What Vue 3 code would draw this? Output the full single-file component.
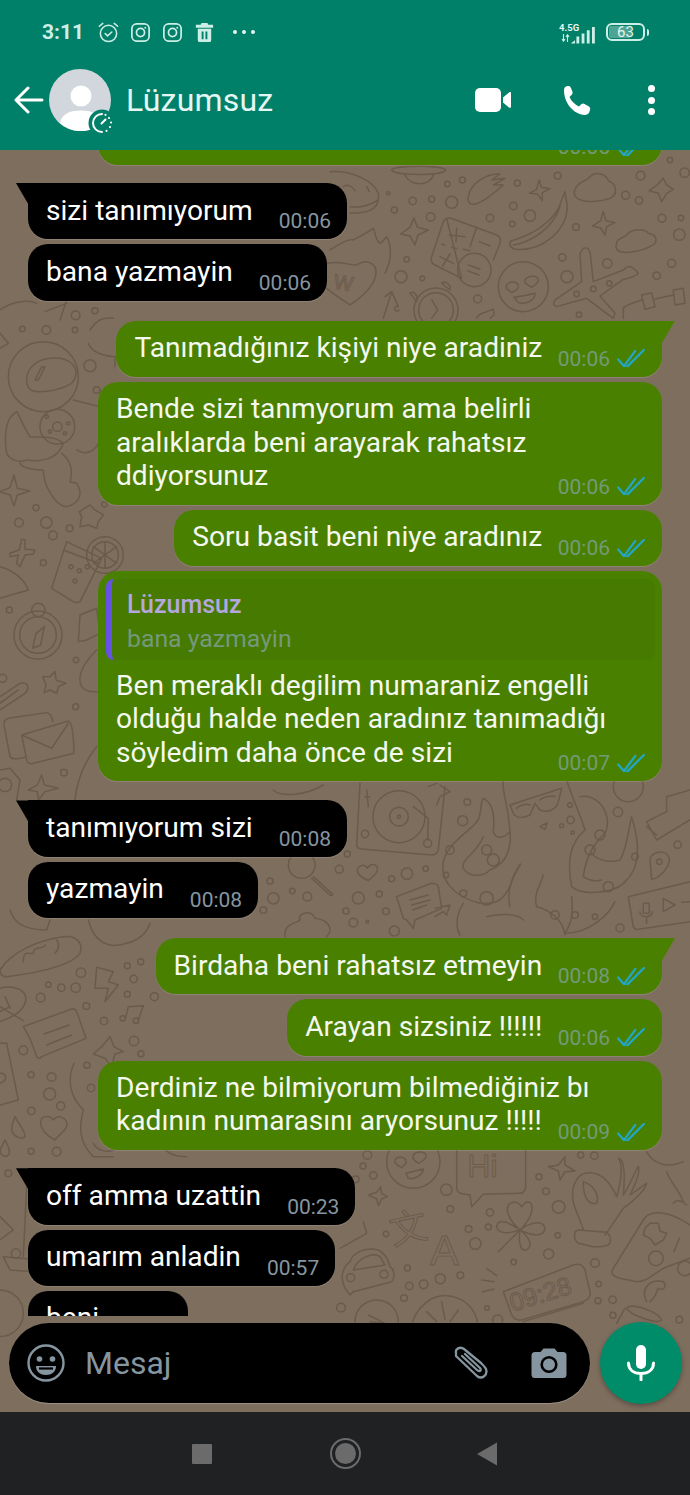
<script setup>
// chat content
const messages = [
  { side: 'out', text: '\u00a0', time: '00:05', wide: true, first: true },
  { side: 'in', text: 'sizi tanımıyorum', time: '00:06', tail: true, group: 'g18' },
  { side: 'in', text: 'bana yazmayin', time: '00:06' },
  { side: 'out', text: 'Tanımadığınız kişiyi niye aradiniz', time: '00:06', tail: true, group: 'g20' },
  { side: 'out', text: 'Bende sizi tanmyorum ama belirli\naralıklarda beni arayarak rahatsız\nddiyorsunuz', time: '00:06', wide: true },
  { side: 'out', text: 'Soru basit beni niye aradınız', time: '00:06' },
  {
    side: 'out',
    text: 'Ben meraklı degilim numaraniz engelli\nolduğu halde neden aradınız tanımadığı\nsöyledim daha önce de sizi',
    time: '00:07',
    wide: true,
    quote: { name: 'Lüzumsuz', text: 'bana yazmayin' }
  },
  { side: 'in', text: 'tanımıyorum sizi', time: '00:08', tail: true, group: 'g19' },
  { side: 'in', text: 'yazmayin', time: '00:08' },
  { side: 'out', text: 'Birdaha beni rahatsız etmeyin', time: '00:08', tail: true, group: 'g20' },
  { side: 'out', text: 'Arayan sizsiniz !!!!!!', time: '00:06' },
  { side: 'out', text: 'Derdiniz ne bilmiyorum bilmediğiniz bı\nkadının numarasını aryorsunuz !!!!!', time: '00:09', wide: true },
  { side: 'in', text: 'off amma uzattin', time: '00:23', tail: true, group: 'g18' },
  { side: 'in', text: 'umarım anladin', time: '00:57' },
  { side: 'in', text: 'beni', time: '00:58', short: true }
]

// wallpaper doodles, each zone drawn in 3x coordinates from its origin
const zones = [
  {
    x: 330, y: 150,
    circles: [[175,130,5],[248,153,11],[305,148,9],[365,157,18],[193,180,9],[302,201,13],[352,102,8],[397,90,9],[562,99,9],[683,77,10],[550,168,11],[480,204,11],[547,222,8],[600,197,17],[738,231,10],[887,136,12],[927,151,11],[932,77,13],[1064,68,14],[1020,30,8],[996,205,12],[1053,204,8],[1048,254,17],[230,328,8],[213,380,18],[277,385,7],[697,322,11],[832,340,14],[1025,340,12],[980,377,11],[711,380,18],[443,447,12],[747,494,8],[433,360,50],[580,410,75],[318,480,66],[318,480,52],[790,417,8],[838,400,8],[740,432,8]],
    paths: [
      'M0 65 C60 60 130 90 145 130 C150 170 130 190 60 190 M40 110 C50 100 70 110 75 122 M110 110 L118 125 M60 170 C90 175 120 165 145 150',
      'M185 60 C190 45 340 45 347 60 C340 78 195 78 185 60 M225 75 C240 110 300 110 310 75',
      'M415 140 C420 100 470 70 510 72 L485 90 L525 85 L490 105 L520 105 C490 130 440 175 420 160 Q412 152 415 140Z',
      'M628 90 L634 112 L660 116 L637 128 L637 152 L622 132 L598 130 L620 118Z',
      'M705 125 L695 150 C680 210 610 255 545 272 C535 280 540 295 555 298 C640 305 710 240 712 170 L705 125 M690 170 C670 230 610 275 550 285',
      'M735 120 C740 95 770 95 780 80 C800 60 830 75 835 92 C860 100 865 135 840 145 C800 160 730 160 733 125Z',
      'M1000 85 L1010 105 L1030 118 L1010 130 L995 155 L985 130 L958 122 L982 105Z',
      'M820 185 L828 212 L855 218 L830 230 L825 255 L812 234 L788 228 L812 212Z',
      'M860 280 C860 262 885 265 895 250 C915 232 950 240 955 250 C985 255 985 280 960 290 C930 305 860 320 858 290Z',
      'M252 203 L262 232 L295 240 L264 255 L255 285 L240 258 L212 252 L240 232Z',
      'M350 205 Q360 203 370 207 L500 255 Q515 262 510 280 L490 330 M395 385 L315 345 Q300 338 305 320 L340 215 Q345 207 350 205Z M380 235 L378 275 M358 255 L405 260 M448 275 L480 288 M330 320 L370 340 M360 312 L338 348 M440 232 L420 290 M335 282 L345 285 M365 292 L380 296 M400 298 L420 302 M415 345 L450 358 M412 362 L447 375',
      'M-10 340 C40 330 70 350 80 345 C110 325 140 340 138 370 C135 410 90 445 60 465 C30 445 -10 420 -25 400',
      'M0 300 C30 280 60 265 70 270 C85 260 110 250 130 235 C140 260 135 270 150 280 C160 275 165 265 170 260 C185 290 185 330 165 370',
      'M530 405 C540 390 565 395 565 410 C565 420 550 425 545 428 C535 420 525 415 530 405Z M585 390 C595 375 625 375 625 390 C625 400 615 405 605 412 C595 405 580 400 585 390Z M552 442 C570 440 595 435 615 430 C615 450 590 465 565 458Z',
      'M760 295 C775 290 780 300 782 320 L790 395 L880 360 C895 345 905 345 925 370 C915 380 900 385 880 388 L810 438 L855 490 L850 505 L770 445 L680 470 C665 465 670 450 690 440 L755 395 L750 310Z',
      'M880 505 L880 475 C885 465 920 455 935 450 M975 447 L1030 435 M935 435 L965 428 L975 470 L945 478Z M1030 420 L1060 415 L1065 460 L1035 465Z',
      'M305 450 L323 480 L305 505 M335 400 C345 390 365 405 360 420Z M240 430 C250 420 265 435 260 455Z',
      'M160 505 L185 425 L205 470 M185 425 L165 440 M205 470 a7 7 0 1 0 2 10',
      'M440 505 C445 490 460 490 470 485 L490 478 L492 495 L480 505'
    ],
    texts: [
      { value: 'W', x: 8, y: 415, size: 62, rotate: 10 }
    ]
  },
  {
    x: 0, y: 300,
    circles: [[227,46,13],[285,32,9],[67,87,8],[139,90,13],[225,90,8],[270,197,18],[290,270,10],[108,623,9],[313,613,8],[57,668,13],[139,668,17],[209,685,10],[159,706,13],[130,788,9],[28,930,9],[228,1080,8],[8,1135,12],[227,1220,9],[192,1418,10],[130,230,105],[172,380,52],[172,380,14],[140,350,5],[205,370,5],[150,395,5],[195,400,5],[213,800,6],[238,812,6],[262,800,6],[225,843,6],[315,765,55],[315,765,40],[114,1005,72],[114,1005,55],[115,930,20],[15,1455,20]],
    paths: [
      'M80 240 C80 190 130 170 180 175 C230 185 240 220 215 250 C190 265 150 275 115 275 C90 275 80 260 80 240Z M105 240 L125 200 L135 200 L115 240Z',
      'M50 335 C20 350 10 400 20 460 C30 480 60 490 80 480 C150 490 180 460 190 430 C170 410 130 410 90 410 C70 380 60 350 50 335',
      'M60 490 C70 510 130 510 130 510 C130 560 170 620 200 620 C240 610 250 580 230 550 L210 545 C220 510 210 480 185 460 M220 300 L300 320 M230 450 C260 470 290 450 300 420',
      'M42 525 L52 565 L90 573 L52 585 L42 618 L30 585 L0 575 L30 563Z',
      'M270 615 L285 630 L310 645 L295 665 L290 685 L265 675 L240 680 L245 650 L238 635Z',
      'M65 718 L75 720 L75 748 L105 750 L100 762 L75 765 L60 800 L50 790 L55 765 L30 770 L30 760 L58 750Z',
      'M0 800 C40 810 75 840 85 870 L0 895',
      'M200 725 L305 775 L240 905 Q230 910 220 905 L155 865Z M190 750 L295 790 M315 725 L315 805 M280 740 L350 790 M280 790 L350 740',
      'M133 980 L122 1035 L98 1045 L108 1000Z',
      'M0 1190 L60 1150 C85 1145 90 1165 75 1180 L0 1230 M0 1210 L55 1170',
      'M25 1255 L140 1238 Q155 1240 158 1265 M25 1255 Q10 1260 12 1275 L30 1370 Q35 1380 60 1375 L75 1372',
      'M65 1305 L205 1263 Q220 1265 222 1360 L100 1390 Q85 1395 80 1380Z M65 1305 L155 1345 L205 1270',
      'M125 1425 L133 1455 L175 1465 L135 1475 L115 1500 L112 1475 L85 1470 L112 1455Z',
      'M0 1410 L30 1405 L60 1440 L50 1500',
      'M165 1115 L168 1140 L198 1150 L175 1160 L170 1180 L150 1170 L132 1178 L138 1155 L128 1130 L150 1130Z',
      'M240 945 L290 925 L300 1000 L260 1020 L235 1025Z M290 1050 C250 1090 230 1130 245 1160 C260 1180 280 1175 300 1175',
      'M270 90 C290 60 310 50 340 55 M265 130 C275 160 320 170 345 170 L345 200',
      'M0 30 C40 0 90 0 110 10 M135 35 L200 10 M180 60 L200 0 M0 100 L25 130 L0 145',
      'M290 1340 C250 1390 230 1450 225 1500'
    ]
  },
  {
    x: 250, y: 780,
    circles: [[652,66,10],[638,122,15],[268,268,12],[292,222,9],[471,281,17],[425,296,9],[527,266,8],[60,303,9],[70,355,17],[127,333,8],[172,350,13],[325,354,18],[388,342,9],[288,393,9],[408,394,10],[310,428,13],[352,425,4],[40,390,10],[433,453,15],[1104,96,14],[1283,194,11],[1110,444,12],[960,75,7],[935,137,6],[962,120,11],[968,158,5],[447,110,78],[447,110,28],[447,110,5],[533,190,12],[345,162,11],[600,210,13],[588,285,8],[710,210,15],[730,240,18],[1050,165,15],[1020,210,15],[1155,230,10],[710,355,20],[640,340,10],[1075,320,15],[975,405,10],[1035,410,8],[915,405,13],[155,255,40],[1228,245,8],[1135,20,45]],
    paths: [
      'M330 10 L320 195 Q320 205 335 207 L545 225 Q560 225 565 210 L585 20 M490 80 L535 115 L533 180 M350 30 L355 80 M345 50 L360 50 M535 20 L560 10 M570 15 L600 35 L570 50 L560 75',
      'M690 100 C690 145 600 170 580 245 C570 300 610 350 690 370 C740 375 770 360 790 290 C800 270 805 260 812 252',
      'M700 55 C730 70 735 110 730 155 C740 180 760 175 780 155 C785 210 770 250 720 270 C700 290 660 295 640 265 C630 240 680 220 700 170 M700 55 C690 70 695 85 690 100',
      'M760 0 C755 40 775 70 780 155',
      'M990 50 C1050 40 1090 110 1065 160 C1020 200 1005 250 1000 290 C1030 310 1050 300 1055 300',
      'M950 0 C965 50 990 100 1005 150 C960 190 950 240 965 320 C1000 350 1100 340 1130 300 C1170 260 1170 190 1145 110 C1135 150 1130 210 1110 240 C1080 250 1040 240 1025 220',
      'M810 255 C780 300 770 340 780 380 M880 285 C870 320 850 340 860 380 C900 390 940 420 945 465 M640 370 C620 400 615 440 630 465 M965 350 C970 400 965 430 945 460 C1020 460 1080 400 1095 365 M710 410 C750 400 800 400 820 420',
      'M780 75 L935 25 L925 65 C920 90 890 100 870 90 L855 70 L840 105 C820 115 800 115 790 100Z M800 85 C810 75 830 70 840 75 M870 60 C880 50 910 45 915 50 M870 140 L892 128 L885 148Z',
      'M322 270 C325 255 345 250 352 265 C365 245 385 255 382 270 C380 285 360 295 355 302 C340 295 320 285 322 270Z',
      'M190 290 L245 340 Q252 350 240 345 L185 295',
      'M440 350 L545 310 Q560 310 565 320 L575 385 L495 420 L490 445 L470 420 L460 415Z M480 360 L535 345 M485 375 L540 360 M488 390 L530 375 M555 385 L600 375 L590 405 L580 395 L555 410',
      'M1200 240 C1200 215 1250 205 1258 235 C1260 265 1225 295 1205 298Z',
      'M1135 350 L1320 305 M1135 350 L1150 440 Q1155 450 1165 448 L1320 425 M1180 370 L1198 370 L1198 400 L1180 400Z M1170 395 C1170 415 1205 415 1208 395 M1190 415 L1190 430 M1240 355 L1275 375 L1240 395Z M1295 367 L1320 365',
      'M1190 125 L1250 95 L1250 50 L1320 30 M1190 125 L1220 180 L1320 120 M1190 140 L1220 165',
      'M105 470 C100 430 140 430 150 420 C140 395 190 390 195 415 C240 420 250 450 230 470 M70 30 C90 50 160 50 220 15'
    ]
  },
  {
    x: 330, y: 1145,
    circles: [[112,30,13],[99,63,9],[130,91,11],[77,103,10],[349,134,17],[361,192,10],[480,202,11],[475,246,9],[416,252,10],[436,296,17],[168,267,8],[232,369,9],[331,401,15],[391,391,10],[281,418,13],[238,423,11],[222,459,10],[33,488,13],[471,489,7],[551,351,8],[656,327,15],[683,271,8],[686,186,19],[648,139,10],[627,95,9],[752,30,9],[793,32,11],[795,354,13],[806,417,8],[804,467,9],[848,464,11],[849,511,9],[1048,524,10],[503,525,15],[250,50,80],[62,398,12],[162,388,12],[978,340,22],[1065,370,22],[140,530,65]],
    paths: [
      'M195 45 C205 30 230 35 228 55 L215 68 C205 62 190 55 195 45Z M250 30 C262 15 290 20 288 35 C285 45 275 50 265 55 C255 48 245 42 250 30Z M228 85 L280 72 C280 90 250 105 235 100Z',
      'M380 0 L380 130 Q382 145 400 147 L420 150 L425 185 L460 148 L570 145 Q585 145 587 125 L587 0',
      'M570 255 C540 230 520 190 540 175 C565 165 570 180 575 185 C590 165 610 165 605 200 C600 225 580 245 570 255 C600 230 640 225 645 250 C640 280 600 270 570 255 C600 280 610 300 590 315 C570 320 565 290 570 255 C540 265 505 270 500 245 C505 215 540 235 570 255 M570 255 L505 320',
      'M730 170 C720 120 745 90 765 85 C810 75 840 110 860 155 C880 90 875 50 865 40 C885 40 885 100 880 150 C905 110 920 70 925 65 C930 75 925 100 900 150 L950 115 C945 140 900 175 880 190 C860 220 840 250 825 270 M730 170 C735 200 755 230 760 255 M760 110 C790 120 810 150 800 175 C770 180 760 150 760 110 M745 255 L830 262 Q845 270 840 295 Q830 308 790 305 L745 295 Q730 285 735 260Z',
      'M850 370 L940 225 C960 190 1020 200 1080 240 M850 370 C840 385 850 395 870 400 L920 410 C950 410 960 395 1000 370 L1080 340 M960 235 L985 235 L990 258 L1010 265 L1000 285 L975 300 L960 280 L940 270 L945 250Z M1048 280 L1032 320 M950 470 C930 430 960 400 1000 410 C1010 420 1005 440 985 430 C975 440 985 450 960 470',
      'M950 20 C970 60 1020 70 1060 50 M1010 80 C1020 110 1050 140 1060 170 M1030 175 C1040 160 1060 170 1070 180',
      'M705 35 L705 60 L735 78 L705 80 L690 105 L685 78 L655 65 L685 60Z',
      'M152 125 L155 145 L172 155 L155 162 L145 182 L140 162 L115 150 L140 142Z',
      'M60 350 C70 320 110 305 145 315 C165 325 175 345 180 365 C195 375 195 400 185 410 L70 440 L60 450 L45 430 C30 400 35 370 60 350 M70 375 L165 360 M70 375 C80 340 130 320 150 335 L165 360',
      'M520 440 L730 360 Q755 352 765 375 L780 440 Q785 460 760 470 L575 525 Q555 528 545 510Z M580 530 L760 475 M470 370 L500 392 M455 405 L492 410 M457 440 L492 432',
      'M245 540 C260 480 310 450 350 452 C400 455 440 490 443 540 M290 500 L320 530 M335 470 L345 525 M385 495 L360 530',
      'M115 510 L165 535 L120 530',
      'M890 490 C900 470 985 500 995 525 C985 540 900 510 890 490 M885 490 L860 535',
      'M100 230 L110 265 L30 310'
    ],
    texts: [
      { value: 'Hi', x: 412, y: 95, size: 96 },
      { value: '文', x: 188, y: 300, size: 112, rotate: -12 },
      { value: 'A', x: 300, y: 360, size: 130 },
      { value: '09:28', x: 548, y: 500, size: 76, rotate: -17 }
    ]
  },
  {
    x: 0, y: 910,
    circles: [[243,188,14],[382,167,9],[422,155,9],[401,207,11],[382,253,9],[463,260,12],[145,224,8],[184,233,11],[227,233,14],[122,263,13],[259,288,10],[312,333,11],[402,393,14],[423,431,9],[70,421,13],[261,466,9],[273,534,11],[93,494,9],[155,501,13],[149,552,18],[182,588,12],[94,603,11],[93,724,9],[170,725,13],[368,325,8],[408,332,8],[25,790,10],[48,1030,14],[0,1210,70]],
    paths: [
      'M0 180 C30 130 110 90 190 80 C230 75 250 100 240 130 C210 170 100 190 20 200 C5 200 0 190 0 180 M70 155 C70 115 90 135 100 130 C100 105 130 120 135 105 M170 90 C180 105 175 120 165 130',
      'M290 172 L340 185 L325 215 L355 225 L315 275 L325 235 L285 235Z',
      'M0 235 C30 225 75 235 78 265 C75 305 30 325 0 335 M0 290 L70 332 M15 260 L30 295 M0 305 L30 290',
      'M375 330 L385 290 L430 287 L415 330',
      'M70 350 L215 297 Q225 295 230 305 L258 385 L125 440 Q115 450 110 440 L90 385Z M132 372 L208 345 M140 405 L215 375',
      'M330 380 L342 410 L370 425 L345 432 L335 470 L315 445 L280 432 L305 410Z',
      'M0 400 L20 400 L55 570 L0 585 M0 490 C20 490 25 510 0 520',
      'M45 620 C55 640 80 670 75 680 C65 690 40 680 35 660 C35 640 40 630 45 620Z M15 690 C22 705 35 725 25 735 C15 745 0 735 0 720Z',
      'M122 635 C125 615 150 615 160 630 C175 610 205 625 200 650 C190 670 170 680 165 690 C145 680 120 660 122 635Z',
      'M222 460 C200 510 210 560 250 600 C240 640 230 690 280 740 L340 740',
      'M80 830 L70 1040 M10 1040 L120 1050 L100 1085 L30 1080Z M0 920 L40 960 L0 990',
      'M30 0 C40 30 60 60 140 60 L150 30 M265 30 C280 90 320 120 380 100 C420 90 440 70 450 40',
      'M480 700 C500 730 520 740 560 740 M280 700 C290 720 320 730 340 720'
    ]
  }
]
</script>

<template>
  <div class="phone">
    <header class="appbar">
      <div class="status">
        <span class="clock">3:11</span>
        <svg class="st-icon" viewBox="0 0 24 24" fill="none" stroke="currentColor" stroke-width="1.6" stroke-linecap="round" stroke-linejoin="round">
          <circle cx="12" cy="13" r="8.5" />
          <path d="M8.5 13l2.5 2.5 4.5-4M2.5 5.5L6 2.5M21.5 5.5L18 2.5" />
        </svg>
        <svg class="st-icon" viewBox="0 0 24 24" fill="none" stroke="currentColor" stroke-width="1.8">
          <rect x="3" y="3" width="18" height="18" rx="5" />
          <circle cx="12" cy="12" r="4.2" />
          <circle cx="17" cy="7" r="1" fill="currentColor" stroke="none" />
        </svg>
        <svg class="st-icon" viewBox="0 0 24 24" fill="none" stroke="currentColor" stroke-width="1.8">
          <rect x="3" y="3" width="18" height="18" rx="5" />
          <circle cx="12" cy="12" r="4.2" />
          <circle cx="17" cy="7" r="1" fill="currentColor" stroke="none" />
        </svg>
        <svg class="st-icon" viewBox="0 0 24 24" fill="currentColor">
          <path d="M9 2h6l1 2h5v3H3V4h5zM5 8h14v12a2 2 0 0 1-2 2H7a2 2 0 0 1-2-2zm4 3v8h2v-8zm4 0v8h2v-8z" fill-rule="evenodd" />
        </svg>
        <span class="more-dots"><i></i><i></i><i></i></span>
        <span class="status-right">
          <span class="net">
            <span class="net-label">4.5G</span>
            <svg class="net-arrows" viewBox="0 0 9 8" fill="none" stroke="currentColor" stroke-width="1.1">
              <path d="M2.5 0v7M1 5.2l1.5 2 1.5-2M6.5 8V1M5 2.8l1.5-2 1.5 2" />
            </svg>
          </span>
          <svg class="signal" viewBox="0 0 26 18" fill="currentColor">
            <path d="M0 17l4-3v3.5H0zM5.500 10h3v7.500h-3zM11 7h3v10.500h-3zM16.500 3.500h3v14h-3zM22 0h3v17.500h-3z" />
          </svg>
          <span class="battery"><span class="battery-fill"></span><span class="battery-num">63</span></span>
          <span class="battery-cap"></span>
        </span>
      </div>

      <div class="title-row">
        <svg class="back" viewBox="0 0 30 28" fill="none" stroke="#fff" stroke-width="3" stroke-linecap="round" stroke-linejoin="round">
          <path d="M2 14h26M14 2L2 14l12 12" />
        </svg>
        <div class="avatar">
          <svg viewBox="0 0 62 62" width="62" height="62">
            <circle cx="31" cy="31" r="31" fill="#d1d7dc" />
            <circle cx="32" cy="27" r="10.500" fill="#fff" />
            <path d="M11 54c2-10 11-12.500 21-12.500S49 44 53 54a31 31 0 0 1-42 0z" fill="#fff" />
          </svg>
          <svg class="avatar-badge" viewBox="0 0 28 28" fill="none" stroke="#fff" stroke-width="2" stroke-linecap="round">
            <circle cx="14" cy="14" r="13.500" fill="#008069" stroke="none" />
            <path d="M14 5a9 9 0 0 0 0 18" />
            <path d="M17.500 5.800v0M21 9v0M23 13.500v0M22 18v0M18.500 21.800v0" stroke-width="2.200" />
            <path d="M13.500 14.500l4-4" />
          </svg>
        </div>
        <h1 class="name">Lüzumsuz</h1>
        <svg class="act-video" viewBox="0 0 36 24" fill="#fff">
          <rect x="0" y="0" width="26" height="24" rx="5" />
          <path d="M28 9.500l6-5c1-.8 2-.3 2 1v13c0 1.300-1 1.800-2 1l-6-5z" />
        </svg>
        <svg class="act-call" viewBox="0 0 31 31" fill="#fff">
          <path d="M3 5Q3 2 6 1L8 1Q9 1 10 3L11.500 7Q12 9 10.500 10L8.500 12Q11 18 18 21.500L20.500 19Q22 18 23.500 19L28 21.500Q30 23 29 25L28 28Q26 30 24 30C12 29 3 18 3 5Z" />
        </svg>
        <span class="act-menu"><i></i><i></i><i></i></span>
      </div>
    </header>

    <main class="chat">
      <svg class="wallpaper" viewBox="0 0 690 1262" fill="none" stroke="#6b5b4a" stroke-width="4.500" stroke-linejoin="round" stroke-linecap="round">
        <g v-for="(zone, z) in zones" :key="z" :transform="`translate(${zone.x} ${zone.y - 150}) scale(.3333)`">
          <circle v-for="(c, i) in zone.circles" :key="i" :cx="c[0]" :cy="c[1]" :r="c[2]" />
          <path v-for="(d, i) in zone.paths" :key="i" :d="d" />
          <text
            v-for="t in zone.texts"
            :key="t.value"
            :x="t.x"
            :y="t.y"
            :font-size="t.size"
            :transform="t.rotate ? `rotate(${t.rotate} ${t.x} ${t.y})` : null"
            class="wall-text"
          >{{ t.value }}</text>
        </g>
      </svg>

      <div class="messages">
        <div
          v-for="(m, i) in messages"
          :key="i"
          class="bubble"
          :class="[m.side, m.group, { tail: m.tail, wide: m.wide, first: m.first, short: m.short, quoted: m.quote }]"
        >
          <div v-if="m.quote" class="quote">
            <div class="quote-name">{{ m.quote.name }}</div>
            <div class="quote-text">{{ m.quote.text }}</div>
          </div>
          <div class="body">
            <div class="text">
              <div v-for="(line, l) in m.text.split('\n')" :key="l" class="line">{{ line }}</div>
            </div>
            <span class="meta">
              <span class="time">{{ m.time }}</span>
              <svg v-if="m.side === 'out'" class="ticks" viewBox="0 0 30 20" fill="none" stroke="#22a6c4" stroke-width="2.400" stroke-linecap="round" stroke-linejoin="round">
                <path d="M1 11l6 7L19 2M11 18L28 1" />
                <path d="M7 18h4" stroke-width="1.500" />
              </svg>
            </span>
          </div>
        </div>
      </div>

      <div class="composer">
        <div class="pill">
          <svg class="smile" viewBox="0 0 38 38" fill="none" stroke="#8696a0" stroke-width="2.400">
            <circle cx="19" cy="19" r="17.500" />
            <circle cx="12.500" cy="15" r="2.800" fill="#8696a0" stroke="none" />
            <circle cx="25.500" cy="15" r="2.800" fill="#8696a0" stroke="none" />
            <path d="M9 22h20c0 6-4.500 9-10 9s-10-3-10-9z" fill="#8696a0" stroke="none" />
            <path d="M12 24.500h14" stroke="#000" stroke-width="2.200" />
          </svg>
          <span class="placeholder">Mesaj</span>
          <svg class="clip" viewBox="0 0 38 34" fill="none" stroke="#8696a0" stroke-width="2.300" stroke-linecap="round" stroke-linejoin="round">
            <path d="M4 10L25 30C30 34 36 29 34 23C33 21 31 19 29 17L12 3C8 0 3 3 4 7Z" />
            <path d="M13 8L28 22C30 25 27 26 25 24L10 10" />
          </svg>
          <svg class="cam" viewBox="0 0 36 32">
            <path d="M12.500 1.500h11l3 3.500H32a3.500 3.500 0 0 1 3.500 3.500v19A3.500 3.500 0 0 1 32 31H4a3.500 3.500 0 0 1-3.500-3.500v-19A3.500 3.500 0 0 1 4 5h5.500z" fill="#8696a0" />
            <circle cx="18" cy="17.500" r="7.300" fill="none" stroke="#000" stroke-width="2.600" />
          </svg>
        </div>
        <div class="mic">
          <svg viewBox="0 0 28 36" width="28" height="36" fill="none" stroke="#fff" stroke-width="3" stroke-linecap="round">
            <rect x="9" y="0" width="10" height="24" rx="5" fill="#fff" stroke="none" />
            <path d="M1.500 18c0 7 5.500 10.500 12.500 10.500S26.500 25 26.500 18M14 28.500V35" />
          </svg>
        </div>
      </div>
    </main>

    <nav class="navbar">
      <span class="nav-square"></span>
      <span class="nav-circle"><i></i></span>
      <svg class="nav-back" viewBox="0 0 20 24"><path d="M20 0.500v23L0 12z" fill="#6b6b6b" /></svg>
    </nav>
  </div>
</template>

<style>
html,
body {
  margin: 0;
  background: #1f2123;
}
</style>

<style scoped>
.phone {
  width: 690px;
  height: 1495px;
  display: flex;
  flex-direction: column;
  overflow: hidden;
  font-family: Roboto, "Noto Sans", sans-serif;
}

.appbar {
  height: 150px;
  background: #008069;
  flex: none;
  position: relative;
  z-index: 2;
}

.status {
  height: 64px;
  display: flex;
  align-items: center;
  padding: 0 41px 0 42px;
  color: #cdeee6;
}

.clock {
  font-size: 21px;
  font-weight: 700;
  width: 55px;
}

.st-icon {
  width: 23px;
  height: 23px;
  margin-right: 9px;
}

.more-dots {
  display: flex;
  gap: 5px;
  margin-left: 8px;
}

.more-dots i {
  width: 4px;
  height: 4px;
  border-radius: 50%;
  background: #e4f5f1;
}

.status-right {
  margin-left: auto;
  display: flex;
  align-items: center;
}

.net {
  display: flex;
  flex-direction: column;
  width: 23px;
  margin-right: -11px;
}

.net-label {
  font-size: 9.500px;
  font-weight: 700;
  line-height: 11px;
  color: #e4f5f1;
}

.net-arrows {
  width: 9px;
  height: 8px;
  margin: 1px 0 0 2px;
}

.signal {
  width: 25px;
  height: 17px;
  margin: 6px 10px 0 0;
}

.battery {
  position: relative;
  width: 39px;
  height: 18px;
  box-sizing: border-box;
  border: 2px solid #cdeee6;
  border-radius: 6px;
  display: flex;
  align-items: center;
  justify-content: center;
  overflow: hidden;
}

.battery-fill {
  position: absolute;
  left: 1px;
  top: 1px;
  bottom: 1px;
  width: 62%;
  background: #4fa593;
  border-radius: 2px;
}

.battery-num {
  position: relative;
  font-size: 15px;
  line-height: 1;
  color: #e4f5f1;
}

.battery-cap {
  width: 2px;
  height: 7px;
  margin-left: 2px;
  background: #cdeee6;
  border-radius: 0 2px 2px 0;
}

.title-row {
  height: 72px;
  display: flex;
  align-items: center;
  padding-left: 14px;
}

.back {
  width: 30px;
  height: 28px;
  flex: none;
}

.avatar {
  position: relative;
  width: 62px;
  height: 62px;
  margin-left: 5px;
  flex: none;
}

.avatar-badge {
  position: absolute;
  left: 39px;
  top: 40px;
  width: 28px;
  height: 28px;
}

.name {
  margin: 0 0 0 15px;
  font-size: 32px;
  font-weight: 400;
  color: #e6f6f2;
  letter-spacing: 0.2px;
}

.act-video {
  width: 36px;
  height: 24px;
  margin-left: auto;
  flex: none;
}

.act-call {
  width: 31px;
  height: 31px;
  margin-left: 50px;
  flex: none;
}

.act-menu {
  display: flex;
  flex-direction: column;
  gap: 4.500px;
  margin: 0 35px 0 56px;
}

.act-menu i {
  width: 7px;
  height: 7px;
  border-radius: 50%;
  background: #fff;
}

.chat {
  flex: 1;
  min-height: 0;
  position: relative;
  background: #7e6e5e;
  display: flex;
  flex-direction: column;
}

.wallpaper {
  position: absolute;
  inset: 0;
  width: 690px;
  height: 1262px;
}

.wall-text {
  font-family: "Liberation Sans", "Noto Sans CJK SC", sans-serif;
  stroke-width: 2.800;
}

.messages {
  position: relative;
  height: 1166px;
  overflow: hidden;
  display: flex;
  flex-direction: column;
  flex: none;
  gap: 5px;
  padding: 0 28px;
  box-sizing: border-box;
}

.bubble {
  position: relative;
  flex: none;
  border-radius: 20px;
  color: #f4f8ef;
  box-shadow: 0 1px 1px rgba(255, 255, 255, 0.14);
  box-sizing: border-box;
}

.in {
  align-self: flex-start;
  background: #000;
  color: #fff;
}

.out {
  align-self: flex-end;
  background: #4a8000;
}

.first {
  margin-top: -41.300px;
}

.g18 {
  margin-top: 13px;
}

.g19 {
  margin-top: 14px;
}

.g20 {
  margin-top: 15px;
}

.wide {
  width: 564px;
}

.tail.in {
  border-top-left-radius: 0;
}

.tail.out {
  border-top-right-radius: 0;
}

.tail::before {
  content: "";
  position: absolute;
  top: 0;
  width: 14px;
  height: 24px;
}

.tail.in::before {
  left: -12px;
  background: #000;
  clip-path: polygon(0 0, 100% 0, 100% 100%, 12% 12%);
}

.tail.out::before {
  right: -13px;
  background: #4a8000;
  clip-path: polygon(0 0, 100% 0, 88% 12%, 0 100%);
}

.body {
  display: flex;
  justify-content: space-between;
  padding: 10.500px 16px 12.500px 18px;
}

.text {
  font-size: 28.150px;
  line-height: 33.300px;
}

.line {
  white-space: pre;
  width: fit-content;
}

.wide .text {
  flex: 1 1 0;
  min-width: 0;
}

.meta {
  display: flex;
  align-items: center;
  align-self: flex-end;
  flex: none;
  margin: 0 0 -7.500px 15.500px;
  height: 26px;
  gap: 7px;
}

.in .meta {
  margin-left: 26px;
}

.short .meta {
  margin-left: 21px;
}

.time {
  font-size: 21px;
  color: #8696a0;
}

.out .time {
  color: #739a78;
}

.ticks {
  width: 29px;
  height: 19px;
}

.quoted .body {
  padding-top: 1px;
}

.quote {
  margin: 8px 7px 8px 8px;
  height: 81px;
  box-sizing: border-box;
  padding: 11px 0 0 15px;
  background: #477a00;
  border-left: 6px solid #6653e6;
  border-radius: 8px;
}

.quote-name {
  font-size: 25px;
  font-weight: 500;
  line-height: 30px;
  color: #b3a7dd;
}

.quote-text {
  font-size: 24.800px;
  line-height: 37px;
  color: #75987c;
}

.composer {
  height: 80px;
  margin-top: 7px;
  padding: 0 8px 0 9px;
  display: flex;
  align-items: center;
  justify-content: space-between;
  position: relative;
}

.pill {
  width: 581px;
  height: 80px;
  box-sizing: border-box;
  background: #000;
  border-radius: 40px;
  box-shadow: 0 1px 1px rgba(255, 255, 255, 0.25);
  display: flex;
  align-items: center;
  padding-left: 18px;
}

.smile {
  width: 38px;
  height: 38px;
  flex: none;
}

.placeholder {
  margin-left: 20px;
  font-size: 32px;
  color: #8696a0;
}

.clip {
  width: 38px;
  height: 34px;
  margin-left: auto;
  flex: none;
}

.cam {
  width: 36px;
  height: 32px;
  margin: 0 23px 0 41px;
  flex: none;
}

.mic {
  width: 82px;
  height: 82px;
  flex: none;
  border-radius: 50%;
  background: #008c69;
  box-shadow: 0 2px 5px rgba(0, 0, 0, 0.3);
  display: flex;
  align-items: center;
  justify-content: center;
}

.navbar {
  height: 83px;
  flex: none;
  background: #1f2123;
  display: flex;
  align-items: center;
  padding-left: 192px;
}

.nav-square {
  width: 20px;
  height: 20px;
  background: #6b6b6b;
  border-radius: 1px;
}

.nav-circle {
  width: 31px;
  height: 31px;
  box-sizing: border-box;
  margin-left: 118px;
  border: 2px solid #6b6b6b;
  border-radius: 50%;
  display: flex;
  align-items: center;
  justify-content: center;
}

.nav-circle i {
  width: 21px;
  height: 21px;
  border-radius: 50%;
  background: #6b6b6b;
}

.nav-back {
  width: 20px;
  height: 24px;
  margin-left: 116px;
}
</style>
